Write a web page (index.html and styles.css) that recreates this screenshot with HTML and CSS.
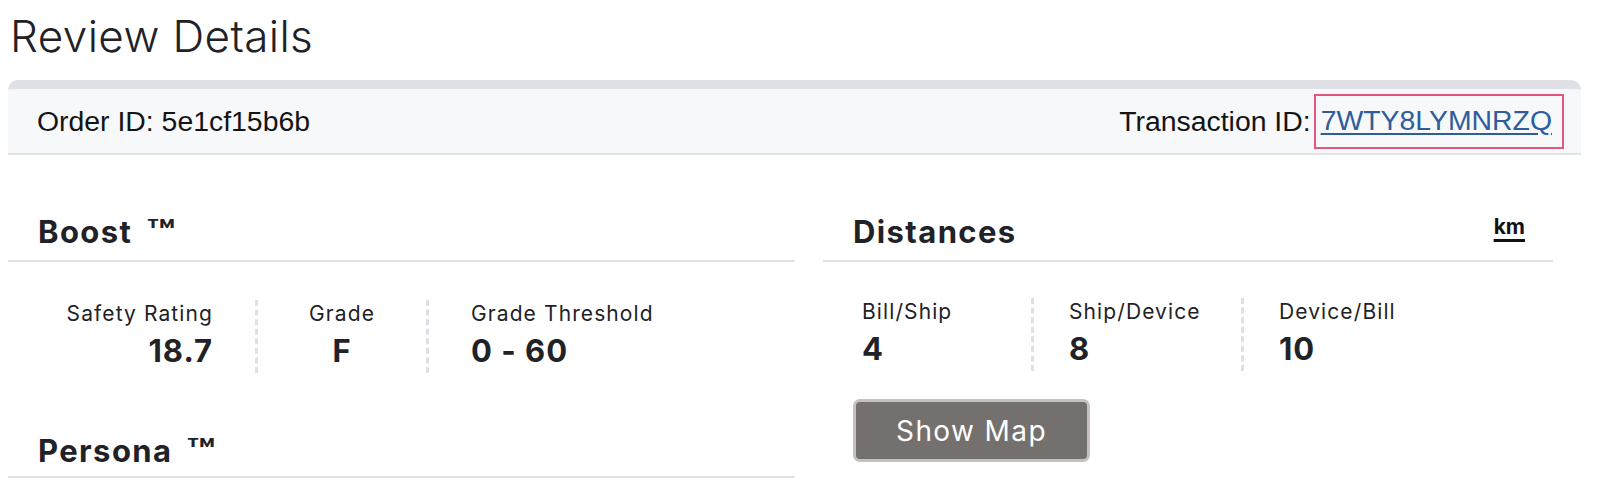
FILE: index.html
```html
<!DOCTYPE html>
<html lang="en">
  <head>
    <meta charset="UTF-8" />
    <meta name="viewport" content="width=device-width, initial-scale=1.0" />
    <title>Review Details</title>
    <link rel="stylesheet" href="styles.css">
  </head>
  <body>
    <div class="page">
      <h1 class="page-title">Review Details</h1>

      <div class="review-card">
        <div class="card-header">
          <span>Order ID: 5e1cf15b6b</span>
          <span class="txn">Transaction ID:<a href="#" class="txn-link">7WTY8LYMNRZQ</a></span>
        </div>

        <div class="card-body">
          <div class="col">
            <section class="panel">
              <div class="panel-head">
                <h2>Boost <span class="tm">&trade;</span></h2>
              </div>
              <div class="stats boost-stats">
                <div class="stat stat-right">
                  <div class="stat-label">Safety Rating</div>
                  <div class="stat-value">18.7</div>
                </div>
                <div class="stat stat-center">
                  <div class="stat-label">Grade</div>
                  <div class="stat-value">F</div>
                </div>
                <div class="stat">
                  <div class="stat-label">Grade Threshold</div>
                  <div class="stat-value">0 - 60</div>
                </div>
              </div>
            </section>

            <section class="panel persona">
              <div class="panel-head">
                <h2>Persona <span class="tm">&trade;</span></h2>
              </div>
            </section>
          </div>

          <div class="col">
            <section class="panel">
              <div class="panel-head">
                <h2>Distances</h2>
                <a href="#" class="unit">km</a>
              </div>
              <div class="stats distance-stats">
                <div class="stat">
                  <div class="stat-label">Bill/Ship</div>
                  <div class="stat-value">4</div>
                </div>
                <div class="stat">
                  <div class="stat-label">Ship/Device</div>
                  <div class="stat-value">8</div>
                </div>
                <div class="stat">
                  <div class="stat-label">Device/Bill</div>
                  <div class="stat-value">10</div>
                </div>
              </div>
              <button type="button" class="map-btn">Show Map</button>
            </section>
          </div>
        </div>
      </div>
    </div>
  </body>
</html>
```

FILE: styles.css
```css
body {
  margin: 0;
  padding: 0;
  background-color: #fff;
  color: #1f2226;
  font-family: Inter, "Noto Sans", sans-serif;
}

.page {
  width: 1573px;
  margin-left: 8px;
}

.page-title {
  margin: 0;
  padding: 11px 0 0 2px;
  height: 80px;
  box-sizing: border-box;
  font-size: 44px;
  font-weight: 300;
  line-height: 50px;
  letter-spacing: 0.4px;
  color: #1f2226;
}

/* order header */
.card-header {
  display: flex;
  justify-content: space-between;
  align-items: center;
  height: 64px;
  padding: 0 17px 0 29px;
  background-color: #f7f8fa;
  border-top: 9px solid #dfe1e6;
  border-bottom: 2px solid #e1e3e7;
  border-radius: 10px 10px 0 0;
  font-family: "Liberation Sans", Arial, sans-serif;
  font-size: 28.4px;
  color: #141414;
}

.txn {
  display: flex;
  align-items: center;
}

.txn-link {
  margin-left: 3px;
  padding: 8px 10px 10px 5px;
  border: 2px solid #e5557f;
  color: #2f5c9b;
  text-decoration: underline;
  text-underline-offset: 3px;
}

/* two columns */
.card-body {
  display: grid;
  grid-template-columns: 787px 730px;
  column-gap: 28px;
}

.panel-head {
  display: flex;
  justify-content: space-between;
  align-items: flex-end;
  height: 107px;
  padding: 0 28px 0 30px;
  border-bottom: 2px solid #dfe2e6;
  box-sizing: border-box;
}

.panel-head h2 {
  margin: 0 0 9px;
  font-size: 31px;
  font-weight: 700;
  line-height: 38px;
  letter-spacing: 1.4px;
  color: #1f2226;
}

.tm {
  display: inline-block;
  margin-left: 5px;
  transform: scale(1.5, 1.1);
  transform-origin: left center;
}

.unit {
  margin-bottom: 20px;
  font-size: 21px;
  font-weight: 700;
  line-height: 26px;
  color: #111;
  text-decoration: underline;
  text-decoration-thickness: 3px;
  text-underline-offset: 5px;
}

/* stat rows */
.stats {
  display: flex;
  margin-top: 38px;
}

.stat {
  height: 73px;
  padding: 0 42px;
  box-sizing: border-box;
}

.stat + .stat {
  border-left: 3px dashed #dde0e5;
}

.stat-label {
  font-size: 21px;
  line-height: 28px;
  letter-spacing: 1.1px;
  color: #1f2226;
}

.stat-value {
  margin-top: 4px;
  font-size: 31px;
  font-weight: 700;
  line-height: 38px;
  letter-spacing: 1px;
  color: #1f2226;
}

.stat-right {
  width: 247px;
  text-align: right;
}

.stat-center {
  width: 171px;
  text-align: center;
}

.distance-stats {
  margin-top: 36px;
}

.distance-stats .stat {
  padding: 0 38px 0 35px;
}

.distance-stats .stat:first-child {
  width: 208px;
  padding-left: 39px;
}

.distance-stats .stat:nth-child(2) {
  width: 210px;
}

.map-btn {
  display: block;
  width: 237px;
  height: 63px;
  margin: 28px 0 0 30px;
  background-color: #74706d;
  border: 3px solid #c8c0bc;
  border-radius: 7px;
  color: #fff;
  font-family: Inter, "Noto Sans", sans-serif;
  font-size: 28px;
  letter-spacing: 1.4px;
  cursor: pointer;
}

.persona .panel-head {
  height: 105px;
}

.persona .panel-head h2 {
  margin-bottom: 6px;
}
```
